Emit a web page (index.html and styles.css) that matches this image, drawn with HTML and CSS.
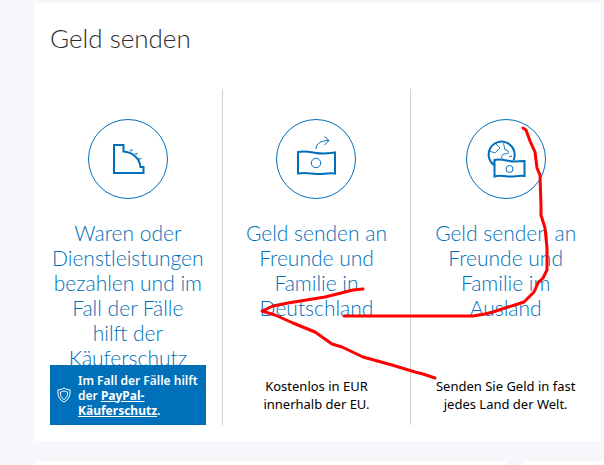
FILE: index.html
```html
<!DOCTYPE html>
<html lang="de">

<head>
  <meta charset="UTF-8">
  <meta name="viewport" content="width=device-width, initial-scale=1.0">
  <title>Geld senden</title>
  <link rel="stylesheet" href="styles.css">
</head>

<body>

  <main>
    <section class="card">
      <h1>Geld senden</h1>
      <div class="options">
        <div class="option">
          <svg class="icon" viewBox="0 0 80 80">
            <circle class="ring" cx="40" cy="40" r="39.5" />
            <path class="bold" d="M26 26h9.500v6.500C44 33 51.500 39 52.500 48h3v6H26z" />
            <path class="ticks" d="M41.500 31h3.500M42.500 33l1.500-2M46.500 34.500h3.500M47.500 36.500l1.500-2M50 39.500h3.500M51 41.500l1.500-2" />
          </svg>
          <h2><a href="#">Waren oder Dienstleistungen bezahlen und im Fall der Fälle<br>hilft der Käuferschutz</a></h2>
          <div class="protection">
            <svg class="shield" viewBox="0 0 14 16">
              <path d="M7 1C5.500 2.200 3.200 2.800 1 2.800C.6 8.500 2.200 12.800 7 15C11.800 12.800 13.400 8.500 13 2.800C10.800 2.800 8.500 2.200 7 1z" />
              <path d="M7 3.800C6 4.500 4.700 5 3.400 5C3.400 8.500 4.200 11 7 12.500C9.800 11 10.600 8.500 10.600 5C9.300 5 8 4.500 7 3.800z" />
            </svg>
            <p>Im Fall der Fälle hilft der <a href="#">PayPal-Käuferschutz</a>.</p>
          </div>
        </div>

        <div class="option">
          <svg class="icon" viewBox="0 0 80 80">
            <circle class="ring" cx="40" cy="40" r="39.5" />
            <path class="bold" d="M22 33C29 31.500 34 33 40 34C46 35 52 34.500 59 33.500V54.500C52 53.500 46 55.500 40 55C34 54.500 29 53 22 54.500z" />
            <circle cx="40" cy="44" r="4.700" />
            <path d="M40 30C40 24.500 45 21.500 53 21.500M48.500 17.500L53 21.500L48.500 26" />
          </svg>
          <h2><a href="#">Geld senden an Freunde und Familie in Deutschland</a></h2>
          <p class="info">Kostenlos in EUR innerhalb der EU.</p>
        </div>

        <div class="option">
          <svg class="icon" viewBox="0 0 80 80">
            <circle class="ring" cx="40" cy="40" r="39.5" />
            <path class="bold" d="M28.500 46.500A13 13 0 1 1 47.500 41" />
            <path d="M30 24C31 28 33 26 33.500 28.500C34 31 31 30.500 30 33C29 35 28 33 22.500 32M39 23C36 25 39 27 38.500 29C38 32 42 30 42.500 33C43 35 40 34.500 38 35C35 36 35 39 36.500 40M43 38l3-1M30 41l-4 3" />
            <path class="bold" d="M28.500 41C33 39.500 38 41 43 42C48 43 53 42.500 58.500 42V57C53 56 48 58 43 57.500C38 57 33 56 28.500 57.500z" />
            <circle cx="43.500" cy="50" r="3.500" />
          </svg>
          <h2><a href="#">Geld senden an Freunde und Familie im Ausland</a></h2>
          <p class="info">Senden Sie Geld in fast jedes Land der Welt.</p>
        </div>
      </div>

      <!-- hand drawn marker -->
      <svg class="marker" viewBox="0 0 566 438" width="566" height="438">
        <path d="M489 125l3 2 4 11 5 11 2 16 3 7 1 31v9l4 13 2 20v22l-4 8-5 5-4 9-10 10-6 2-10 3-15 5-8 2-12 2H310" />
        <path d="M329 286l-10 1-28 7-37 6-15 3-11 5 13 4 18 8 22 9 17 12 10 3 21 10 29 8 23 7 8 2 12 4" />
      </svg>
    </section>

    <div class="more">
      <section class="card"></section>
      <section class="card"></section>
    </div>
  </main>

</body>

</html>
```

FILE: styles.css
```css
* {
  margin: 0;
  padding: 0;
  box-sizing: border-box;
}

body {
  font-family: "Noto Sans", "Open Sans", sans-serif;
  background-color: #f5f7fb;
  color: #000;
}

main {
  display: flex;
  flex-direction: column;
  min-height: 100vh;
  padding: 3px 4px 0 34px;
}

.card {
  position: relative;
  background-color: #fff;
}

h1 {
  padding: 19px 16px 35px;
  font-family: Lato, sans-serif;
  font-size: 26px;
  line-height: 32px;
  font-weight: 300;
  color: #2c2e2f;
}

/* Option columns */
.options {
  display: grid;
  grid-template-columns: repeat(3, 1fr);
  padding-bottom: 16px;
}

.option {
  display: flex;
  flex-direction: column;
  align-items: center;
  padding: 30px 16px 0;
  border-right: 1px solid #d0d0d0;
  text-align: center;
}

.option:last-child {
  border-right: none;
}

.icon {
  width: 80px;
  height: 80px;
  margin-bottom: 21px;
  fill: none;
  stroke: #0070ba;
  stroke-width: 1;
}

.icon .bold {
  stroke-width: 2;
}

.icon .ticks {
  stroke-opacity: 0.7;
}

h2 {
  height: 145px;
  overflow: hidden;
  font-family: Lato, sans-serif;
  font-size: 21px;
  line-height: 25px;
  font-weight: 300;
}

h2 a {
  color: #0070ba;
  text-decoration: none;
}

.info {
  padding: 12px 0;
  font-size: 13px;
  line-height: 18px;
}

/* Buyer protection box */
.protection {
  display: flex;
  align-items: center;
  gap: 7px;
  width: 100%;
  min-height: 60px;
  padding: 0 7px;
  background-color: #0070ba;
  color: #fff;
  font-size: 12px;
  line-height: 15px;
  font-weight: 600;
  text-align: left;
}

.protection a {
  color: #fff;
  font-weight: 700;
}

.shield {
  flex: none;
  width: 14px;
  height: 16px;
  fill: none;
  stroke: #fff;
}

.marker {
  position: absolute;
  top: 0;
  left: 0;
  fill: none;
  stroke: #f00;
  stroke-width: 3;
  stroke-linecap: round;
  stroke-linejoin: round;
  pointer-events: none;
}

/* Next row */
.more {
  display: grid;
  flex: 1;
  grid-template-columns: 23fr 4fr;
  gap: 16px;
  margin-top: 20px;
  margin-right: -4px;
}
```
